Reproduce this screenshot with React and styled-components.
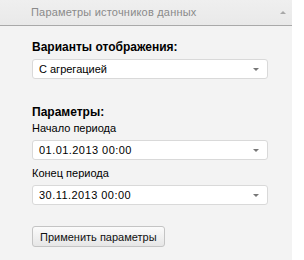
import React from "react";
import styled, { createGlobalStyle } from "styled-components";

const GlobalStyle = createGlobalStyle`
  html, body {
    margin: 0;
    padding: 0;
    background: #ffffff;
  }
  body {
    font-family: "Liberation Sans", Arial, sans-serif;
    font-size: 11px;
    color: #000000;
  }
`;

const Panel = styled.div`
  width: 292px;
  height: 260px;
  background-color: #f3f3f3;
  display: flex;
  flex-direction: column;
`;

const Header = styled.div`
  height: 26px;
  box-sizing: border-box;
  border-bottom: 1px solid #a9a9a9;
  background: linear-gradient(#efefef, #e9e9e9);
  display: flex;
  align-items: center;
  justify-content: space-between;
  padding: 0 6px 1px 31px;
  color: #8a8a8a;
  font-size: 11px;
  letter-spacing: 0.2px;
`;

const Body = styled.div`
  display: flex;
  flex-direction: column;
  padding: 14px 0 0 32px;
`;

const Title = styled.div`
  font-weight: bold;
  font-size: 12px;
  line-height: 14px;
  margin-top: ${(p) => p.top || 0}px;
  margin-bottom: 5px;
`;

const Label = styled.div`
  font-size: 11px;
  line-height: 14px;
  margin-top: ${(p) => p.top || 0}px;
  margin-bottom: 5px;
`;

const Select = styled.div`
  width: 236px;
  height: 20px;
  box-sizing: border-box;
  background: #ffffff;
  border: 1px solid #d9d9d9;
  border-radius: 3px;
  display: flex;
  align-items: center;
  justify-content: space-between;
  padding: 0 8px 0 6px;
  font-size: 11px;
  letter-spacing: ${(p) => (p.mono ? "0.45px" : "0")};
`;

const Caret = styled.span`
  width: 0;
  height: 0;
  border-left: 3px solid transparent;
  border-right: 3px solid transparent;
  border-${(p) => (p.up ? "bottom" : "top")}: 3px solid ${(p) => (p.up ? "#a8a8a8" : "#777777")};
`;

const Button = styled.button`
  margin-top: 21px;
  align-self: flex-start;
  height: 21px;
  padding: 0 7px;
  font-family: "Liberation Sans", Arial, sans-serif;
  font-size: 11px;
  color: #111111;
  background: linear-gradient(#fbfbfb, #e6e6e6);
  border: 1px solid #c4c4c4;
  border-radius: 3px;
`;

export default function App() {
  return (
    <>
      <GlobalStyle />
      <Panel>
        <Header>
          <span>Параметры источников данных</span>
          <Caret up />
        </Header>
        <Body>
          <Title>Варианты отображения:</Title>
          <Select>
            <span>С агрегацией</span>
            <Caret />
          </Select>
          <Title top={26}>Параметры:</Title>
          <Label top={-3}>Начало периода</Label>
          <Select mono>
            <span>01.01.2013 00:00</span>
            <Caret />
          </Select>
          <Label top={6}>Конец периода</Label>
          <Select mono>
            <span>30.11.2013 00:00</span>
            <Caret />
          </Select>
          <Button>Применить параметры</Button>
        </Body>
      </Panel>
    </>
  );
}
